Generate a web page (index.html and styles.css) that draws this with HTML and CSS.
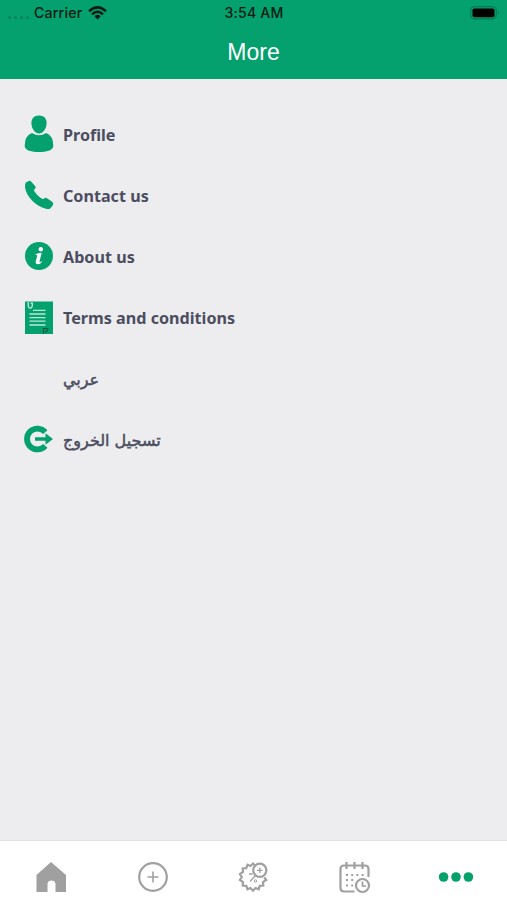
FILE: index.html
```html
<!DOCTYPE html>
<html lang="en">
    <head>
        <meta charset="utf-8">
        <title>More</title>
        <link rel="stylesheet" href="styles.css">
    </head>
    <body>
        <header>
            <div class="status">
                <div class="carrier">
                    <span class="signal"><i></i><i></i><i></i><i></i></span>
                    <span class="carrier-name">Carrier</span>
                    <svg class="wifi" width="19" height="14" viewBox="0 0 19 14">
                        <path d="M1 5.2Q9.500-2.500 18 5.200M4 8.300Q9.500 3.300 15 8.300" fill="none" stroke="#031b13" stroke-width="2.500" />
                        <path d="M6.300 10.200Q9.500 7.400 12.700 10.200L9.500 13.500Z" fill="#031b13" />
                    </svg>
                </div>
                <span class="time">3:54 AM</span>
                <svg class="battery" width="30" height="14" viewBox="0 0 30 14">
                    <rect x="0.700" y="0.700" width="25.600" height="12.200" rx="3.500" fill="none" stroke="#04704e" />
                    <rect x="2.500" y="2.500" width="22" height="8.800" rx="1.800" fill="#000" />
                    <path d="M28 4.800Q30 6.800 28 8.800Z" fill="#04704e" />
                </svg>
            </div>
            <h1>More</h1>
        </header>

        <ul class="menu">
            <li>
                <svg width="30" height="38" viewBox="0 0 30 38">
                    <path d="M15 0.500C20 0.500 22.600 3.500 22.600 8C22.600 13.500 19 18.500 15 18.500S7.400 13.500 7.400 8C7.400 3.500 10 0.500 15 0.500Z" />
                    <path d="M8 18Q15 22.500 22 18Q29.300 20.500 29.300 31C29.300 35.500 22 37 15 37S0.700 35.500 0.700 31Q0.700 20.500 8 18Z" />
                </svg>
                <span>Profile</span>
            </li>
            <li>
                <svg width="30" height="30" viewBox="0 0 30 30">
                    <path d="M2 2.200L5 0.900Q6.500 0.500 7.500 2L11.500 6.500Q12.100 7.700 10.800 9L9.800 10.300C11.500 13.500 15 17.200 19 19.300L20.700 18Q21.700 17.300 23 18.200L28.500 22Q29.800 23.300 29 25L26.500 28.200Q25 29.500 22 28.800C12 26.500 2.500 17 1 7.500Q0.600 3.600 2 2.200Z" />
                </svg>
                <span>Contact us</span>
            </li>
            <li>
                <svg width="30" height="30" viewBox="0 0 30 30">
                    <circle cx="15" cy="15" r="14" />
                    <circle cx="16.800" cy="8.300" r="2.200" fill="#fff" />
                    <path d="M11.200 13.300Q14.500 11.800 17.800 11.700L15.500 20.300Q15.300 21.800 18.300 20.100C17.300 22.600 15.500 23.300 13.800 23.300Q11.200 23 11.700 20.500L13.300 14.400Z" fill="#fff" />
                </svg>
                <span>About us</span>
            </li>
            <li>
                <svg class="terms" width="30" height="34" viewBox="0 0 30 34">
                    <path d="M1 0.500H29V33H1Z" />
                    <path d="M4.200 1V4.500Q4.500 7.500 6.500 7.200Q8.300 6.800 8.300 4V2.200H6.500" fill="none" stroke="#d3f0e5" stroke-width="1.200" />
                    <path d="M9 9.300H21.500M5.500 13H21.500M5.500 16.600H21.500M5.500 20.200H21.500M5.500 24H21.500" stroke="#b5ead7" stroke-width="1.300" />
                    <path d="M19.500 32.500V27.500H24.500M21 31.500L24 28.500" fill="none" stroke="#045a3f" stroke-width="1.100" />
                </svg>
                <span>Terms and conditions</span>
            </li>
            <li class="no-icon"><span lang="ar" class="arabic">عربي</span></li>
            <li>
                <svg width="30" height="30" viewBox="0 0 30 30">
                    <path d="M21.300 8.200A10.400 10.400 0 1 0 21.300 21.800" fill="none" stroke="#04a06d" stroke-width="5.800" />
                    <path d="M11 13.200H21.500V9.300L29 15L21.500 20.700V16.800H11Z" />
                </svg>
                <span lang="ar" class="arabic">تسجيل الخروج</span>
            </li>
        </ul>

        <nav>
            <a>
                <svg width="32" height="32" viewBox="0 0 32 32">
                    <path d="M16 1L31 14V31H20.500V23.500Q20.500 19.500 16.500 19.500T12.500 23.500V31H1.500V14Z" fill="#a0a0a0" />
                </svg>
            </a>
            <a>
                <svg class="line" width="32" height="32" viewBox="0 0 32 32">
                    <circle cx="16" cy="16" r="13.800" />
                    <path d="M16 10.500V21.500M10.500 16H21.500" stroke-width="1.600" />
                </svg>
            </a>
            <a>
                <svg class="line" width="32" height="32" viewBox="0 0 32 32">
                    <path d="M17 4.600L15 2.500L12.500 5L9.500 3.700L8.300 7.200L4.700 7.500L5 11L1.900 13L3.800 16L1.900 19L5 21L4.700 24.600L8.300 24.900L9.500 28.300L12.500 27L15 29.700L17.500 27L20.700 28.300L21.700 24.900L25.300 24.600L25 21L28.200 19L26.200 16.500" />
                    <circle cx="21.800" cy="9.300" r="6.600" />
                    <path d="M21.800 6.500V12.100M19 9.300H24.600M12 20.500L18 14M11 13H14.500" stroke-width="1.300" />
                    <circle cx="17.500" cy="20" r="1.200" stroke-width="1" />
                </svg>
            </a>
            <a>
                <svg class="line" width="34" height="34" viewBox="0 0 34 34">
                    <path d="M16.500 31.500H6Q2.500 31.500 2.500 28V9Q2.500 5.500 6 5.500H27Q30.500 5.500 30.500 9V17" />
                    <path d="M8.500 2V9M16.500 2V9M24.500 2V9" />
                    <path d="M8 15H26M8 20H15.500M8 25.500H15.500" stroke-width="2" stroke-dasharray="2 3.200" />
                    <circle cx="24.500" cy="25.500" r="6.500" />
                    <path d="M24.500 21.500V26H28" stroke-width="1.700" />
                </svg>
            </a>
            <a>
                <svg width="36" height="32" viewBox="0 0 36 32">
                    <circle cx="4.600" cy="16" r="4.800" />
                    <circle cx="17" cy="16" r="4.800" />
                    <circle cx="29.400" cy="16" r="4.800" />
                </svg>
            </a>
        </nav>
    </body>
</html>
```
FILE: styles.css
```css
body {
    margin: 0;
    height: 900px;
    display: flex;
    flex-direction: column;
    background: #ededf0;
    font-family: "Noto Sans", "DejaVu Sans", sans-serif;
}
svg {
    display: block;
    overflow: visible;
    fill: #04a06d;
}

header {
    height: 79px;
    background: #04a06d;
}
.status {
    display: grid;
    grid-template-columns: 1fr auto 1fr;
    align-items: center;
    height: 26px;
    padding: 0 7px 0 8px;
    color: #031b13;
    font: 500 14px/26px Inter, sans-serif;
    letter-spacing: 0.25px;
}
.carrier {
    display: flex;
    align-items: center;
}
.signal {
    display: flex;
    gap: 3px;
    width: 26px;
    padding-top: 8px;
}
.signal i {
    width: 3px;
    height: 3px;
    border-radius: 50%;
    background: #048158;
}
.wifi {
    margin-left: 6px;
}
.battery {
    justify-self: end;
}
h1 {
    margin: 7px 0 0;
    color: #fff;
    font: 23px/38px "Liberation Sans", sans-serif;
    text-align: center;
}

.menu {
    flex: 1;
    margin: 0;
    padding: 25px 24px 0;
    list-style: none;
}
.menu li {
    display: flex;
    align-items: center;
    gap: 9px;
    height: 61px;
    color: #4c4d60;
    font-size: 16.15px;
    font-weight: 700;
}
.menu svg {
    margin-bottom: 2px;
}
.menu .terms {
    margin-bottom: 0;
}
.menu .no-icon {
    padding-left: 39px;
}
.arabic {
    padding-top: 2px;
    font: 16px "DejaVu Sans", sans-serif;
    -webkit-text-stroke: 0.5px #4c4d60;
}

nav {
    display: grid;
    grid-template-columns: repeat(5, 1fr);
    height: 59px;
    border-top: 1px solid #e2e2e4;
    background: #fff;
}
nav a {
    display: flex;
    align-items: center;
    justify-content: center;
    padding: 13px 0 0 1px;
}
.line {
    fill: none;
    stroke: #a0a0a0;
    stroke-width: 2.2;
}
```
